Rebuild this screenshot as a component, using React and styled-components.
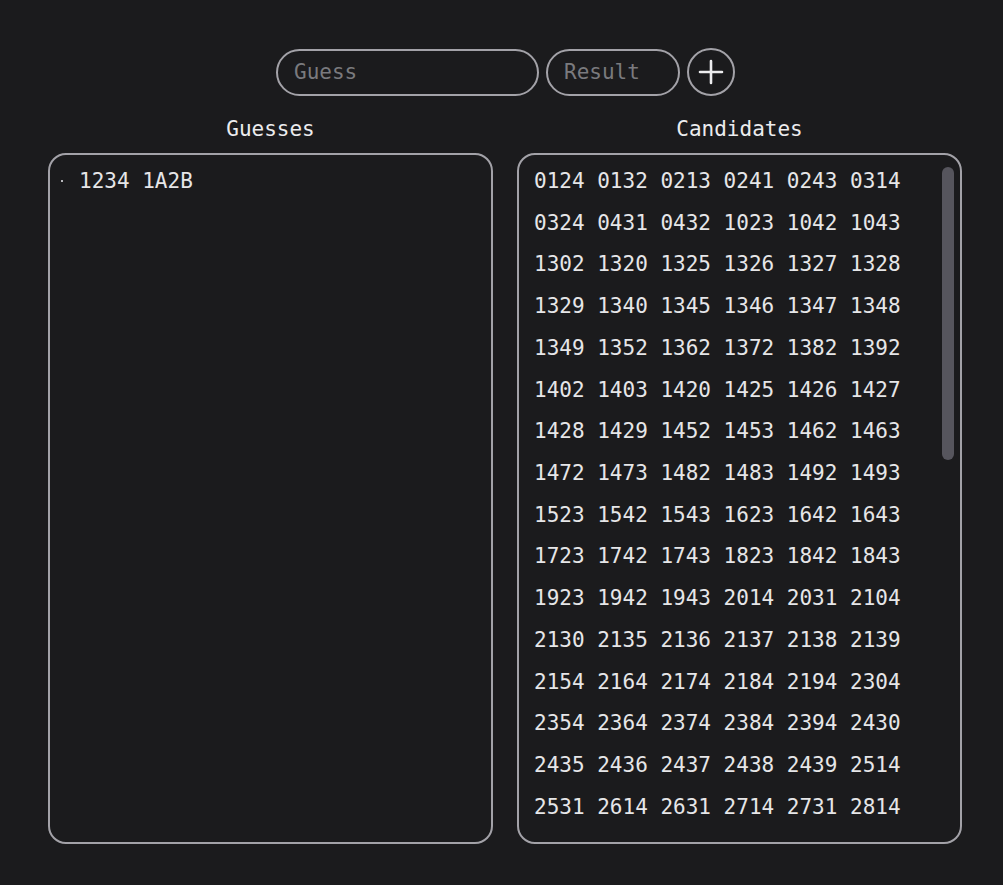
import styled, { createGlobalStyle } from 'styled-components'

const GlobalStyle = createGlobalStyle`
    html, body {
        margin: 0;
        padding: 0;
        background: #1b1b1d;
    }
    body {
        font-family: "DejaVu Sans Mono", "Liberation Mono", monospace;
        color: #e6e6e8;
    }
`

// every 4-digit code with distinct digits that scores 1A2B against 1234
const score = (a, b) => {
    let bulls = 0
    let cows = 0
    for (let i = 0; i < 4; i++) {
        if (a[i] === b[i]) bulls++
        else if (b.includes(a[i])) cows++
    }
    return `${bulls}A${cows}B`
}

const candidates = []
for (let n = 0; n < 10000; n++) {
    const s = String(n).padStart(4, '0')
    if (new Set(s).size !== 4) continue
    if (score(s, '1234') === '1A2B') candidates.push(s)
}

const App = () => {
    return (
        <Page>
            <GlobalStyle />
            <Form>
                <Field $width={263} placeholder="Guess" />
                <Field $width={134} placeholder="Result" />
                <AddButton aria-label="add">
                    <svg width="26" height="26" viewBox="0 0 26 26">
                        <path d="M13 2 V24 M2 13 H24" stroke="#ececee" strokeWidth="2.6" strokeLinecap="round" />
                    </svg>
                </AddButton>
            </Form>
            <Columns>
                <Column>
                    <Heading>Guesses</Heading>
                    <Panel>
                        <GuessList>
                            <GuessItem>
                                <Bullet />
                                1234 1A2B
                            </GuessItem>
                        </GuessList>
                    </Panel>
                </Column>
                <Column>
                    <Heading>Candidates</Heading>
                    <Panel>
                        <CandidateList>
                            {candidates.map(c => (
                                <Candidate key={c}>{c}</Candidate>
                            ))}
                        </CandidateList>
                        <ScrollThumb />
                    </Panel>
                </Column>
            </Columns>
        </Page>
    )
}

const Page = styled.div`
    width: 914px;
    margin-left: 48px;
    padding-top: 48px;
    height: 837px;
`

const Form = styled.div`
    display: flex;
    justify-content: center;
    align-items: center;
    gap: 7px;
    padding-left: 1px;
`

const Field = styled.input`
    box-sizing: border-box;
    width: ${p => p.$width}px;
    height: 47px;
    padding: 0 16px;
    border: 2px solid #a3a2a8;
    border-radius: 24px;
    background: transparent;
    color: #e6e6e8;
    font-family: inherit;
    font-size: 21px;
    outline: none;

    &::placeholder {
        color: #7a7a7e;
    }
`

const AddButton = styled.button`
    box-sizing: border-box;
    width: 48px;
    height: 48px;
    padding: 0;
    border: 2px solid #a3a2a8;
    border-radius: 50%;
    background: transparent;
    display: flex;
    align-items: center;
    justify-content: center;
`

const Columns = styled.div`
    display: grid;
    grid-template-columns: 445px 445px;
    column-gap: 24px;
    margin-top: 16px;
`

const Column = styled.div`
    display: flex;
    flex-direction: column;
`

const Heading = styled.div`
    height: 34px;
    line-height: 34px;
    text-align: center;
    font-size: 21px;
    color: #ececee;
    margin-bottom: 7px;
`

const Panel = styled.div`
    position: relative;
    box-sizing: border-box;
    height: 691px;
    padding: 13px 0 10px;
    border: 2px solid #a3a2a8;
    border-radius: 18px;
    display: flex;
    flex-direction: column;
`

const GuessList = styled.ul`
    list-style: none;
    margin: 0;
    padding: 0 0 0 4px;
`

const GuessItem = styled.li`
    display: flex;
    align-items: center;
    height: 26px;
    font-size: 21px;
    color: #e6e6e8;
`

const Bullet = styled.span`
    width: 2px;
    height: 2px;
    background: #b8b8bc;
    margin: 0 16px 0 7px;
`

const CandidateList = styled.div`
    flex: 1;
    min-height: 0;
    overflow: auto;
    display: flex;
    flex-wrap: wrap;
    align-content: flex-start;
    column-gap: 12.64px;
    row-gap: 15.72px;
    width: 395px;
    padding-left: 15px;
    font-size: 21px;
    line-height: 26px;
    color: #e6e6e8;
`

const Candidate = styled.span``

// scrollbars are hidden in the capture, so the thumb is drawn over the list
const ScrollThumb = styled.div`
    position: absolute;
    top: 12px;
    left: 423px;
    width: 12px;
    height: 293px;
    border-radius: 6px;
    background: #56555d;
`

export default App
